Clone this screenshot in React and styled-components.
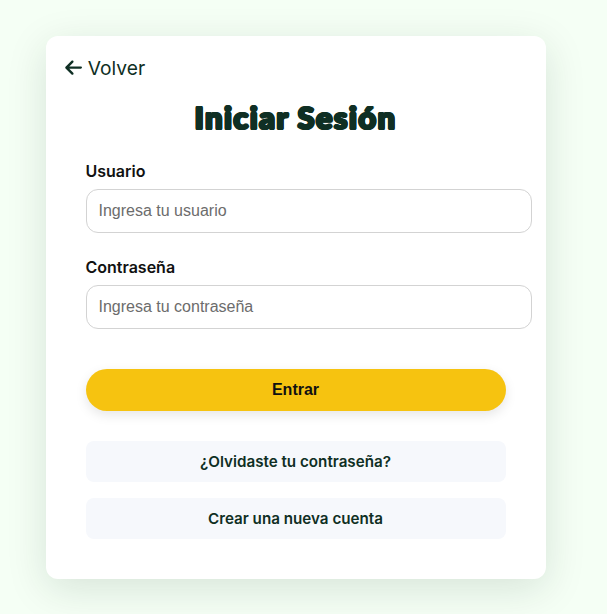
import React from "react";
import styled, { createGlobalStyle } from "styled-components";
import { FaArrowLeft } from "react-icons/fa6";

const GlobalStyle = createGlobalStyle`
  body {
    margin: 0;
    background: #f5fff5;
    font-family: Inter, sans-serif;
    color: #111;
    overflow: hidden;
  }
`;

const Page = styled.main`
  min-height: 614px;
  box-sizing: border-box;
  padding: 36px 0 0 46px;
`;

const Card = styled.section`
  width: 500px;
  height: 543px;
  box-sizing: border-box;
  padding: 20px 40px 40px;
  background: #fff;
  border-radius: 12px;
  box-shadow: 0 10px 40px rgba(17, 45, 34, 0.13);
`;

const BackLink = styled.a`
  display: flex;
  align-items: center;
  gap: 4.6px;
  width: max-content;
  height: 24px;
  margin-left: -22px;
  color: #0f2f24;
  font-size: 19.2px;
  line-height: 24px;
  cursor: pointer;
`;

const Title = styled.h1`
  margin: 16px 0 0 -1px;
  height: 44px;
  color: #0f2f24;
  font: 900 31px/42px Lato, sans-serif;
  letter-spacing: 1.35px;
  text-align: center;
  white-space: nowrap;
  text-shadow:
    1.3px 0 #0f2f24, -1.3px 0 #0f2f24,
    0 1.1px #0f2f24, 0 -1.1px #0f2f24,
    0.9px 0.8px #0f2f24, -0.9px 0.8px #0f2f24,
    0.9px -0.8px #0f2f24, -0.9px -0.8px #0f2f24;
`;

const Form = styled.form`
  display: flex;
  flex-direction: column;
  margin-top: 21px;
`;

const Field = styled.div`
  height: 72px;
  margin-bottom: 24px;
`;

const Label = styled.label`
  display: block;
  height: 20px;
  margin: 0 0 8px -0.5px;
  font-size: 16px;
  font-weight: 600;
  line-height: 20px;
`;

const Input = styled.input`
  display: block;
  box-sizing: border-box;
  width: 446px;
  height: 44px;
  padding: 0 11.5px;
  border: 1px solid #d3d3d3;
  border-radius: 12px;
  background: #fff;
  font: 16px "Liberation Sans", Arial, sans-serif;

  &::placeholder {
    color: #6c6c6c;
    opacity: 1;
  }
`;

const SubmitButton = styled.button`
  height: 42px;
  margin-top: 16px;
  padding: 0 1px 0 0;
  border: 0;
  border-radius: 21px;
  background: #f6c310;
  color: #111;
  font: bold 16px "Liberation Sans", Arial, sans-serif;
  box-shadow: 0 4px 12px rgba(0, 0, 0, 0.1);
`;

const Links = styled.nav`
  display: flex;
  flex-direction: column;
  gap: 16px;
  margin-top: 30px;
`;

const SecondaryLink = styled.a`
  height: 41px;
  padding-right: 1px;
  border-radius: 8px;
  background: #f6f8fc;
  color: #0f2f24;
  font-size: 15.2px;
  font-weight: 600;
  line-height: 41px;
  text-align: center;
  cursor: pointer;
`;

export default function App() {
  return (
    <>
      <GlobalStyle />
      <Page>
        <Card>
          <BackLink><FaArrowLeft /> Volver</BackLink>
          <Title>Iniciar Sesión</Title>
          <Form>
            <Field>
              <Label htmlFor="user">Usuario</Label>
              <Input id="user" placeholder="Ingresa tu usuario" />
            </Field>
            <Field>
              <Label htmlFor="password">Contraseña</Label>
              <Input id="password" type="password" placeholder="Ingresa tu contraseña" />
            </Field>
            <SubmitButton type="button">Entrar</SubmitButton>
          </Form>
          <Links>
            <SecondaryLink>¿Olvidaste tu contraseña?</SecondaryLink>
            <SecondaryLink>Crear una nueva cuenta</SecondaryLink>
          </Links>
        </Card>
      </Page>
    </>
  );
}
